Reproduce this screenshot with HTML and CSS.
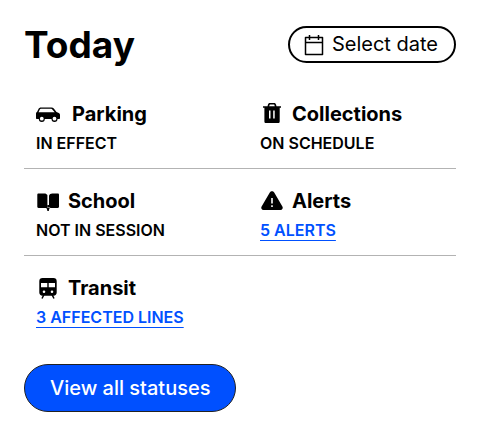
FILE: index.html
```html
<!DOCTYPE html>
<html lang="en">
<head>
<meta charset="utf-8">
<meta name="viewport" content="width=device-width, initial-scale=1">
<title>Today</title>
<link rel="stylesheet" href="styles.css">
</head>
<body>
<main class="today">
  <header class="today-header">
    <h1>Today</h1>
    <button type="button" class="date-button">
      <svg class="date-icon" viewBox="0 0 20 22" aria-hidden="true"><path d="M1.500 3.500h17v17h-17zM1.500 8.500h17M5.500 1v5M14.500 1v5" fill="none" stroke="currentColor" stroke-width="1.500" stroke-linejoin="round"/></svg>
      Select date
    </button>
  </header>
  <div class="statuses">
    <div class="row">
      <section class="status">
        <h2 class="wide"><svg class="icon" viewBox="0 0 24 24" aria-hidden="true"><path fill-rule="evenodd" d="M5 5.500h10.500c1 0 1.700.3 2.300 1L20.500 10l2.300 1c.8.400 1.200 1 1.200 1.800V16c0 .7-.4 1-1 1h-1.500a3 3 0 0 1-6 0H8.800a3 3 0 0 1-6 0H1c-.7 0-1-.4-1-1v-4.500c0-.7.3-1.200 1-1.500l1.500-3c.5-1 1.300-1.500 2.500-1.500zM5 6.800c-.6 0-1 .2-1.200.7L2.500 10.300h16.200l-2.400-2.800c-.3-.4-.6-.7-1.100-.7zM5.800 14.800a1.900 1.900 0 1 0 0 3.800 1.900 1.900 0 0 0 0-3.800zm12.700 0a1.900 1.900 0 1 0 0 3.800 1.900 1.900 0 0 0 0-3.800z"/></svg>Parking</h2>
        <p>IN EFFECT</p>
      </section>
      <section class="status">
        <h2><svg class="icon" viewBox="0 0 24 24" aria-hidden="true"><path fill-rule="evenodd" d="M3 4.200h4.500L8 2.500c.3-1 .9-1.500 1.800-1.500h4.400c.9 0 1.500.5 1.800 1.500l.5 1.700H21v1.500h-1.300V19.500c0 1-.6 1.500-1.600 1.500H6c-1 0-1.600-.5-1.600-1.500V5.700H3zm6.200 0h5.600l-.4-1.300c-.1-.4-.3-.5-.7-.5h-3.400c-.4 0-.6.1-.7.5zM9 8.500v8h1.500v-8zm4.200 0v8h1.500v-8z"/></svg>Collections</h2>
        <p>ON SCHEDULE</p>
      </section>
    </div>
    <div class="row">
      <section class="status">
        <h2><svg class="icon" viewBox="0 0 24 24" aria-hidden="true"><path d="M2.500 4.500h6c1.200 0 2.300.6 2.900 1.600v12.900H2.500c-.7 0-1.200-.5-1.200-1.200V5.700c0-.7.5-1.200 1.200-1.200zM21.800 4.500h-5.500c-1.600 0-2.800.8-3.300 2.200V16h-1.800v3h10.600c.7 0 1.200-.5 1.200-1.200V5.700c0-.7-.5-1.200-1.200-1.200zM9.500 18.500h5c-1 .8-1.500 1.500-1.700 3.500h-1.400c-.2-2-.8-2.700-1.900-3.500z"/></svg>School</h2>
        <p>NOT IN SESSION</p>
      </section>
      <section class="status">
        <h2><svg class="icon" viewBox="0 0 24 24" aria-hidden="true"><path fill-rule="evenodd" d="M9.800 3.500c1-1.700 3.400-1.700 4.400 0l8.200 14c1 1.600-.1 3.500-2 3.500H3.600c-1.900 0-3-1.900-2-3.500zM11.200 9v5.500h1.600V9zm0 7.200V18h1.600v-1.800z"/></svg>Alerts</h2>
        <p><a href="#alerts">5 ALERTS</a></p>
      </section>
    </div>
    <div class="row">
      <section class="status">
        <h2><svg class="icon" viewBox="0 0 24 24" aria-hidden="true"><path fill-rule="evenodd" d="M6.500 2h11c2 0 3.200 1.200 3.200 3.200v11.300c0 2-1.200 3.200-3.200 3.200h-11c-2 0-3.200-1.200-3.200-3.200V5.200C3.300 3.200 4.500 2 6.500 2zM5 7v4.300h6.300V7zm7.700 0v4.300H19V7zM8 14.500a1.300 1.300 0 1 0 0 2.600 1.300 1.300 0 0 0 0-2.600zm8 0a1.300 1.300 0 1 0 0 2.600 1.300 1.300 0 0 0 0-2.600z"/><path d="M7.800 19l-1.800 3.500M16.200 19l1.800 3.500" fill="none" stroke="currentColor" stroke-width="1.500"/></svg>Transit</h2>
        <p><a href="#transit">3 AFFECTED LINES</a></p>
      </section>
    </div>
  </div>
  <a class="view-all" href="#statuses">View all statuses</a>
</main>
</body>
</html>
```
FILE: styles.css
```css
* {
  box-sizing: border-box;
}

body {
  margin: 0;
  background: #fff;
  color: #000;
  font-family: Inter, "Liberation Sans", sans-serif;
}

.today {
  padding: 24px;
}

.today-header {
  display: flex;
  align-items: center;
  justify-content: space-between;
}

h1 {
  margin: 0;
  font-size: 37px;
  line-height: 41px;
  font-weight: 700;
}

.date-button {
  display: flex;
  align-items: center;
  gap: 8px;
  padding: 3px 16px 3px 14px;
  border: 2px solid #000;
  border-radius: 24px;
  background: #fff;
  color: #000;
  font: 400 20px/27px Inter, "Liberation Sans", sans-serif;
}

.date-icon {
  width: 20px;
  height: 22px;
}

.statuses {
  margin-top: 17px;
}

.row {
  display: grid;
  grid-template-columns: 1fr 1fr;
  column-gap: 16px;
  padding: 18px 0 13px;
}

.row + .row {
  border-top: 1px solid #b3b3b3;
}

.status {
  padding-left: 12px;
}

h2 {
  display: flex;
  align-items: center;
  gap: 8px;
  margin: 0 0 3px;
  font-size: 20px;
  line-height: 28px;
  font-weight: 700;
}

h2.wide {
  gap: 12px;
}

.icon {
  width: 24px;
  height: 24px;
  fill: currentColor;
}

p {
  margin: 0;
  font-size: 16px;
  line-height: 24px;
  font-weight: 600;
}

p a {
  color: #0050ff;
  text-decoration: underline;
  text-decoration-thickness: 1px;
  text-underline-offset: 4px;
}

.view-all {
  display: inline-block;
  margin-top: 22px;
  padding: 8px 25px;
  border: 1px solid #222;
  border-radius: 24px;
  background: #0050ff;
  color: #fff;
  font-size: 20px;
  line-height: 30px;
  font-weight: 500;
  text-decoration: none;
}
```
